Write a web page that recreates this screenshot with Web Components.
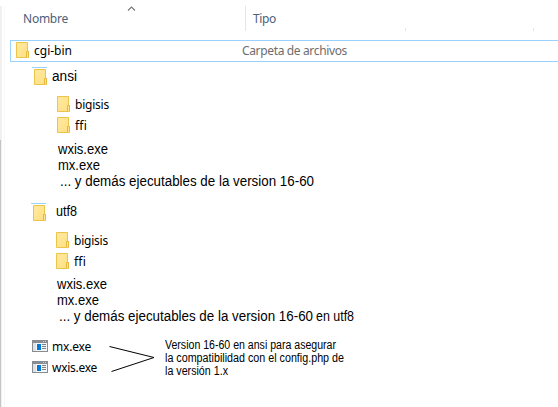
<!DOCTYPE html>
<html lang="es">
<head>
<meta charset="utf-8">
<title>cgi-bin</title>
<style>
html,body{margin:0;height:100%;background:#fff;overflow:hidden}
</style>
</head>
<body>
<file-explorer></file-explorer>
<script>
const define = (name, html, init) => customElements.define(name, class extends HTMLElement {
  connectedCallback() {
    if (this.shadowRoot) return;
    const t = document.createElement('template');
    t.innerHTML = html;
    this.attachShadow({mode: 'open'}).append(t.content.cloneNode(true));
    if (init) init(this, this.shadowRoot);
  }
});

// Label condensed or widened so that it fills the width given in "w"
define('fit-label', `<style>
:host{display:block;flex:none;white-space:pre;height:16px;font:14px/16px "Liberation Sans",Arial,sans-serif;color:#000}
:host([ui]){font:12px/18px "Noto Sans","Open Sans",sans-serif}
:host([head]){color:#4c607a;line-height:16px}
:host([muted]){color:#6d6d6d}
:host([note]){font-size:12px;line-height:13px;height:13px}
span{display:inline-block;transform-origin:0 50%}
</style><span><slot></slot></span>`, (el, root) => {
  const span = root.querySelector('span');
  const natural = span.getBoundingClientRect().width;
  const w = +el.getAttribute('w');
  if (el.hasAttribute('ui')) span.style.letterSpacing = (w - natural) / el.textContent.length + 'px';
  else span.style.transform = `scaleX(${w / natural})`;
  el.style.width = w + 'px';
});

define('folder-icon', `<style>
:host{display:block;flex:none;width:13px;height:16px}
svg{display:block}
</style><svg width="13" height="16" viewBox="0 0 13 16">
<defs><linearGradient id="g" x1="0" y1="0" x2="1" y2="1"><stop offset="0" stop-color="#ffe9a2"/><stop offset="1" stop-color="#ffdf80"/></linearGradient></defs>
<path d="M.5.5h11v9h1v6H.5z" fill="url(#g)" stroke="#ecc548"/>
<path d="M10.5 15V9.5h2v6" fill="#ffe597" stroke="#e5b93d"/></svg>`);

define('app-icon', `<style>
:host{display:block;flex:none;width:16px;height:12px}
svg{display:block}
</style><svg width="16" height="12" viewBox="0 0 16 12" shape-rendering="crispEdges">
<path fill="#898d91" d="M0 0h16v12H0z"/><path fill="#f5f6f7" d="M4 3h11v8H4z"/><path fill="#dfe2e4" d="M1 3h3v8H1z"/>
<path fill="#c9cccf" d="M11 1h1v1h-1zM13 1h1v1h-1z"/>
<path fill="#0078d7" d="M5 4h4v6H5z"/><path fill="#7d8185" d="M10 4h4v1h-4zM10 6h4v1h-4zM10 8h4v1h-4z"/></svg>`);

define('tree-row', `<style>
:host{display:flex;align-items:flex-start;height:16px;box-sizing:border-box}
</style><slot></slot>`);

define('dir-entry', `<style>
:host{display:flex;align-items:flex-start;height:18px}
.icon{width:15px;height:16px;padding-top:1px;border-top:1px solid #99d1ff;display:flex;justify-content:flex-end;flex:none}
</style><div class="icon"><folder-icon></folder-icon></div><slot></slot>`);

define('side-edge', `<style>
:host{display:flex;flex:none;width:5px;height:401px;margin-top:6px;box-sizing:border-box;border-right:1px solid #f8f8f8}
.track{width:2px;background:#f0f0f0;padding-top:134px;box-sizing:border-box}
.thumb{width:1px;height:100%;background:#c4c4c4}
</style><div class="track"><div class="thumb"></div></div>`);

define('column-header', `<style>
:host{display:flex;height:40px;position:relative;box-sizing:border-box}
.name{width:240px;flex:none;height:31px;padding:11px 0 0 18px;box-sizing:border-box}
.type{width:160px;flex:none;height:25px;margin-top:6px;border-left:1px solid #e5e5e5;padding:5px 0 0 7px;box-sizing:border-box}
.tick{width:128px;height:3px;margin-top:28px;border-left:1px solid #e5e5e5;box-sizing:border-box;flex:none}
svg{position:absolute;left:122px;top:5px}
</style>
<div class="name"><fit-label ui head w="45">Nombre</fit-label></div>
<div class="type"><fit-label ui head w="23">Tipo</fit-label></div>
<div class="tick"></div><div class="tick"></div>
<svg width="10" height="7" viewBox="0 0 10 7"><path d="M1 5.5 4.5 2 8 5.5" fill="none" stroke="#777" stroke-width="1.1"/></svg>`);

define('selected-row', `<style>
:host{display:flex;height:22px;margin-left:5px;border:1px solid #99d1ff;border-right:0;box-sizing:border-box;padding:1px 0 0 5px}
.name{margin-left:5px;width:208px;flex:none}
</style><folder-icon></folder-icon><div class="name"><slot name="name"></slot></div><slot name="type"></slot>`);

define('file-explorer', `<style>
:host{display:flex;width:558px;height:407px;overflow:hidden;background:#fff}
main{flex:1;min-width:0}
tree-row{padding-left:53px}
.b{padding-left:52px}
.sub folder-icon{margin-right:5px}
.legend{display:flex;align-items:flex-start;margin-top:14px;padding-left:27px}
.apps{display:grid;gap:5px;width:65px;flex:none}
.apps div{display:flex;gap:4px;height:16px}
.apps app-icon{margin-top:2px}
.join{margin:4px 0 0 12px;flex:none}
.note{margin:1px 0 0 10px}
</style>
<side-edge></side-edge>
<main>
<column-header></column-header>
<selected-row><fit-label slot="name" ui w="38">cgi-bin</fit-label><fit-label slot="type" ui muted w="105">Carpeta de archivos</fit-label></selected-row>
<dir-entry style="margin:5px 0 0 27px"><fit-label w="25" style="margin:1px 0 0 5px">ansi</fit-label></dir-entry>
<tree-row class="sub" style="padding-left:52px;margin-top:11px"><folder-icon></folder-icon><fit-label ui w="34">bigisis</fit-label></tree-row>
<tree-row class="sub" style="padding-left:52px;margin-top:5px"><folder-icon></folder-icon><fit-label ui w="12">ffi</fit-label></tree-row>
<tree-row style="margin-top:8px"><fit-label w="50">wxis.exe</fit-label></tree-row>
<tree-row><fit-label w="42">mx.exe</fit-label></tree-row>
<tree-row style="padding-left:55px"><fit-label w="254">... y demás ejecutables de la version 16-60</fit-label></tree-row>
<dir-entry style="margin:14px 0 0 26px"><fit-label w="21" style="margin:0 0 0 10px">utf8</fit-label></dir-entry>
<tree-row class="sub" style="padding-left:51px;margin-top:11px"><folder-icon></folder-icon><fit-label ui w="34">bigisis</fit-label></tree-row>
<tree-row class="sub" style="padding-left:51px;margin-top:5px"><folder-icon></folder-icon><fit-label ui w="12">ffi</fit-label></tree-row>
<tree-row class="b" style="margin-top:7px"><fit-label w="50">wxis.exe</fit-label></tree-row>
<tree-row class="b"><fit-label w="42">mx.exe</fit-label></tree-row>
<tree-row style="padding-left:54px"><fit-label w="254">... y demás ejecutables de la version 16-60</fit-label><fit-label w="38" style="margin:0 0 0 3px">en utf8</fit-label></tree-row>
<div class="legend">
<div class="apps"><div><app-icon></app-icon><fit-label ui w="39">mx.exe</fit-label></div><div><app-icon></app-icon><fit-label ui w="45">wxis.exe</fit-label></div></div>
<svg class="join" width="46" height="34" viewBox="0 0 46 34"><path d="M.5 4.5 45 15.5 2.5 29.5" fill="none" stroke="#000"/></svg>
<div class="note"><fit-label note w="171">Version 16-60 en ansi para asegurar</fit-label><fit-label note w="179">la compatibilidad con el config.php de</fit-label><fit-label note w="63">la versión 1.x</fit-label></div>
</div>
</main>`);
</script>
</body>
</html>
